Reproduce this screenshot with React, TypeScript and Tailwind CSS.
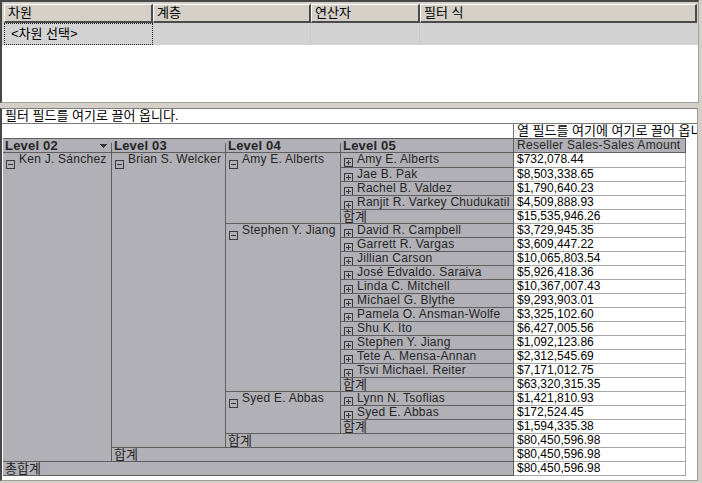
import React from 'react'

type Leaf = { name: string; value: string }
type Group = { name: string; span: string; leaves: Leaf[]; total: string }

const GROUPS: Group[] = [
  {
    name: 'Amy E. Alberts',
    span: 'row-span-5',
    leaves: [
      { name: 'Amy E. Alberts', value: '$732,078.44' },
      { name: 'Jae B. Pak', value: '$8,503,338.65' },
      { name: 'Rachel B. Valdez', value: '$1,790,640.23' },
      { name: 'Ranjit R. Varkey Chudukatil', value: '$4,509,888.93' },
    ],
    total: '$15,535,946.26',
  },
  {
    name: 'Stephen Y. Jiang',
    span: 'row-span-12',
    leaves: [
      { name: 'David R. Campbell', value: '$3,729,945.35' },
      { name: 'Garrett R. Vargas', value: '$3,609,447.22' },
      { name: 'Jillian Carson', value: '$10,065,803.54' },
      { name: 'José Edvaldo. Saraiva', value: '$5,926,418.36' },
      { name: 'Linda C. Mitchell', value: '$10,367,007.43' },
      { name: 'Michael G. Blythe', value: '$9,293,903.01' },
      { name: 'Pamela O. Ansman-Wolfe', value: '$3,325,102.60' },
      { name: 'Shu K. Ito', value: '$6,427,005.56' },
      { name: 'Stephen Y. Jiang', value: '$1,092,123.86' },
      { name: 'Tete A. Mensa-Annan', value: '$2,312,545.69' },
      { name: 'Tsvi Michael. Reiter', value: '$7,171,012.75' },
    ],
    total: '$63,320,315.35',
  },
  {
    name: 'Syed E. Abbas',
    span: 'row-span-3',
    leaves: [
      { name: 'Lynn N. Tsoflias', value: '$1,421,810.93' },
      { name: 'Syed E. Abbas', value: '$172,524.45' },
    ],
    total: '$1,594,335.38',
  },
]

const GRAND = '$80,450,596.98'

// label cells share the dark grid line, value cells the light one
const LABEL = 'overflow-hidden whitespace-nowrap border-r border-b border-[#5f5f5f] bg-[#b0b0b6] text-[#262626]'
const VALUE = 'whitespace-nowrap border-r border-b border-[#a7a7a7] bg-white pl-[3px]'
// hangul in the reference runs a touch larger than the latin text
const KO = 'text-[13px]'

function Toggle({ open }: { open: boolean }) {
  return (
    <svg width="9" height="9" viewBox="0 0 9 9" shapeRendering="crispEdges" className="shrink-0">
      <rect x="0.5" y="0.5" width="8" height="8" fill="none" stroke="#3a3a3a" />
      <path d="M2 4.5h5" stroke="#3a3a3a" />
      {!open && <path d="M4.5 2v5" stroke="#3a3a3a" />}
    </svg>
  )
}

function Member({ name, open, className = '', drop = 'mt-[7px]' }: { name: string; open: boolean; className?: string; drop?: string }) {
  return (
    <div className={`${LABEL} flex items-start gap-[4px] pl-[3px] ${className}`}>
      <span className={drop}>
        <Toggle open={open} />
      </span>
      <span className="tracking-[0.25px]">{name}</span>
    </div>
  )
}

function Total({ label, className = '' }: { label: string; className?: string }) {
  return <div className={`${LABEL} ${KO} pl-[2px] leading-[13px] ${className}`}>{label}</div>
}

function Tick() {
  return <span className="h-[9px] w-px shrink-0 self-end bg-[#5f5f5f]" />
}

function FilterPanel() {
  const head = `h-[19px] border-t border-l border-r-2 border-b-2 border-t-white border-l-white border-r-[#4a4a4a] border-b-[#4a4a4a] pl-[3px] leading-[16px] ${KO}`
  return (
    <div className="h-[103px] w-[699px] border-t-2 border-l-2 border-r border-b border-t-[#474747] border-l-[#474747] border-r-[#a0a0a0] border-b-[#a0a0a0] bg-white">
      <div className="flex bg-[#d4d0c8] pl-[2px] pr-px pt-[2px]">
        <div className={`${head} w-[149px]`}>차원</div>
        <div className={`${head} w-[158px]`}>계층</div>
        <div className={`${head} w-[109px]`}>연산자</div>
        <div className={`${head} flex-1`}>필터 식</div>
      </div>
      <div className="flex h-[22px] bg-[#d3d3d3] pl-[2px] pr-px">
        <div className={`w-[149px] border border-dotted border-[#202020] pl-[6px] leading-[19px] ${KO}`}>&lt;차원 선택&gt;</div>
        <div className="w-[158px] border-r border-[#c9c9c9]" />
        <div className="w-[109px] border-r border-[#c9c9c9]" />
        <div className="flex-1" />
      </div>
    </div>
  )
}

function PivotGrid() {
  return (
    <div className="flex h-[373px] w-[698px] flex-col overflow-hidden border-t border-l-2 border-r border-b border-t-[#808080] border-l-[#474747] border-r-[#9d9d9d] border-b-[#9d9d9d] bg-white">
      <div className={`h-[15px] border-b border-[#7a7a7a] pl-[3px] leading-[14px] ${KO}`}>필터 필드를 여기로 끌어 옵니다.</div>
      <div className="flex h-[14px]">
        <div className="w-[511px] shrink-0" />
        <div className={`min-w-0 flex-1 overflow-hidden whitespace-nowrap border-l border-[#7a7a7a] pl-[3px] leading-[14px] ${KO}`}>
          열 필드를 여기에 여기로 끌어 옵니다
        </div>
      </div>
      <div className="ml-px flex h-[15px]">
        <div className="flex w-[511px] border-t border-r border-b border-[#5f5f5f] bg-[#b0b0b6] text-[13px] font-bold leading-[13px] tracking-[0.2px] text-[#262626]">
          <div className="flex w-[109px] items-center">
            <span className="flex-1 pl-[2px]">Level 02</span>
            <svg width="7" height="4" viewBox="0 0 7 4" shapeRendering="crispEdges" className="mr-[4px] mt-px">
              <path d="M0 0h7L3.5 4z" fill="#333" />
            </svg>
            <Tick />
          </div>
          <div className="flex w-[114px] items-center">
            <span className="flex-1 pl-[2px]">Level 03</span>
            <Tick />
          </div>
          <div className="flex w-[115px] items-center">
            <span className="flex-1 pl-[2px]">Level 04</span>
            <Tick />
          </div>
          <div className="flex flex-1 items-center">
            <span className="pl-[2px]">Level 05</span>
          </div>
        </div>
        <div className="w-[172px] overflow-hidden whitespace-nowrap border-t border-r border-b border-[#5f5f5f] bg-[#b0b0b6] pl-[3px] tracking-[0.3px] text-[#262626]">
          Reseller Sales-Sales Amount
        </div>
      </div>
      <div className="ml-px grid w-[683px] grid-cols-[109px_114px_115px_173px_172px] grid-rows-[15px_repeat(22,14px)]">
        <Member name="Ken J. Sánchez" open className="row-span-22" />
        <Member name="Brian S. Welcker" open className="row-span-21" />
        {GROUPS.map((g) => (
          <React.Fragment key={g.name}>
            <Member name={g.name} open className={g.span} />
            {g.leaves.map((l, i) => (
              <React.Fragment key={l.name + i}>
                <Member name={l.name} open={false} drop="mt-[5px]" />
                <div className={VALUE}>{l.value}</div>
              </React.Fragment>
            ))}
            <Total label="합계" />
            <div className={VALUE}>{g.total}</div>
          </React.Fragment>
        ))}
        <Total label="합계" className="col-span-2" />
        <div className={VALUE}>{GRAND}</div>
        <Total label="합계" className="col-span-3" />
        <div className={VALUE}>{GRAND}</div>
        <Total label="총합계" className="col-span-4" />
        <div className={VALUE}>{GRAND}</div>
      </div>
    </div>
  )
}

export default function App() {
  return (
    <div className="h-[483px] w-[702px] overflow-hidden bg-[#d4d0c8] font-['Liberation_Sans','Noto_Sans_CJK_KR',sans-serif] text-[12px] leading-[13px] text-black">
      <FilterPanel />
      <div className="h-[5px]" />
      <PivotGrid />
    </div>
  )
}
